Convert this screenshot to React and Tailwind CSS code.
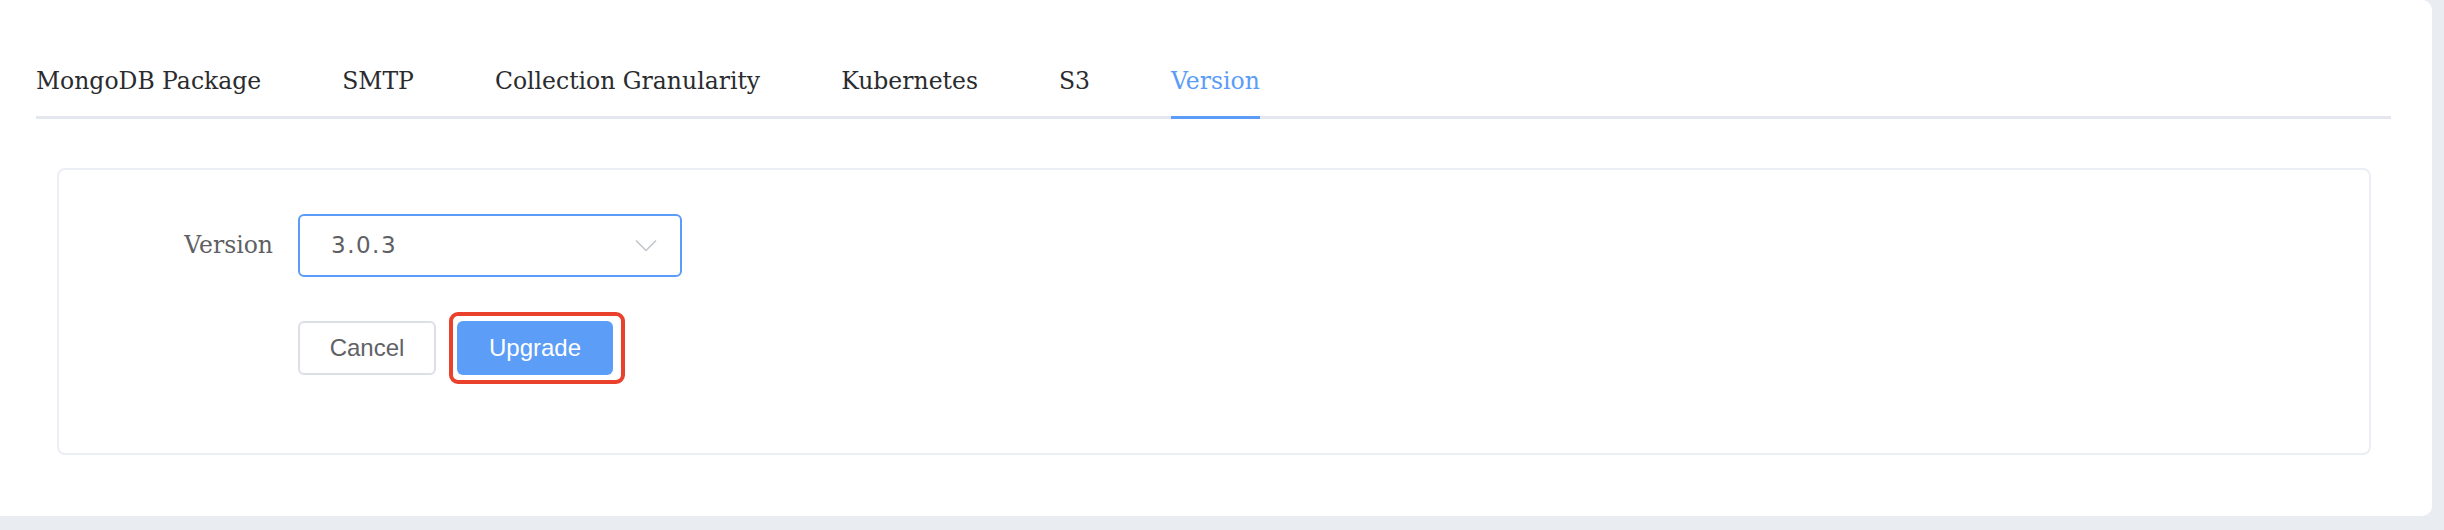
const tabs = ["MongoDB Package", "SMTP", "Collection Granularity", "Kubernetes", "S3", "Version"];

const serif = { fontFamily: '"DejaVu Serif", serif' };

const App = () => {
  return (
    <div className="w-[2444px] h-[530px] bg-[#e9ecf1] overflow-hidden">
      <div className="w-[2432px] h-[516px] bg-white rounded-r-[10px] pl-[36px] pr-[41px] pt-[61px]">
        {/* tabs */}
        <div className="flex gap-[81px] border-b-[3px] border-[#e4e7ed]" style={serif}>
          {tabs.map((tab) => {
            const active = tab === "Version";
            return (
              <div
                key={tab}
                className={
                  active
                    ? "text-[23.5px] leading-[40px] pb-[15px] -mb-[3px] border-b-[3px] border-[#5a9cf8] text-[#5a9cf8]"
                    : "text-[23.5px] leading-[40px] pb-[15px] text-[#2a2b2e]"
                }
              >
                {tab}
              </div>
            );
          })}
        </div>

        {/* form card */}
        <div className="mt-[49px] ml-[21px] mr-[20px] border-2 border-[#ebeef5] rounded-[8px] pt-[44px] pb-[78px]">
          <div className="flex">
            <div
              className="w-[239px] pr-[25px] text-right text-[23.5px] leading-[63px] text-[#5e6064]"
              style={serif}
            >
              Version
            </div>
            <div>
              <div className="w-[384px] h-[63px] border-2 border-[#5a9cf8] rounded-[6px] pl-[31px] pr-[23px] flex items-center justify-between">
                <span
                  className="text-[23px] tracking-[1.5px] text-[#5e6064]"
                  style={{ fontFamily: '"DejaVu Sans", sans-serif' }}
                >
                  3.0.3
                </span>
                <svg width="22" height="13" viewBox="0 0 22 13" fill="none">
                  <path d="M1 1.5 L11 11.5 L21 1.5" stroke="#c0c4cc" strokeWidth="1.5" />
                </svg>
              </div>

              <div
                className="mt-[44px] flex gap-[21px]"
                style={{ fontFamily: '"Liberation Sans", Arial, sans-serif' }}
              >
                <button className="w-[138px] h-[54px] border-2 border-[#dcdfe6] rounded-[6px] bg-white text-[24px] text-[#606266]">
                  Cancel
                </button>
                <div className="relative">
                  <button className="w-[156px] h-[54px] rounded-[6px] bg-[#5c9df8] text-[24px] text-white">
                    Upgrade
                  </button>
                  <div className="absolute -left-[8px] -right-[12px] -top-[9px] -bottom-[9px] border-[4px] border-[#e9412b] rounded-[9px] pointer-events-none" />
                </div>
              </div>
            </div>
          </div>
        </div>
      </div>
    </div>
  );
};

export default App;
